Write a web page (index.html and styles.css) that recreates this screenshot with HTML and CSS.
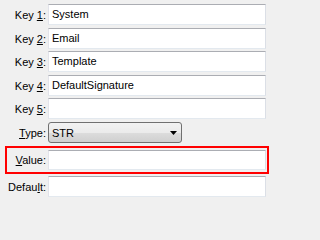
FILE: index.html
```html
<!DOCTYPE html>
<html>
<head>
<meta charset="utf-8">
<link rel="stylesheet" href="styles.css">
</head>
<body>
<div class="form">
  <div class="row first">
    <label class="lbl"><span>Key <u>1</u>:</span></label>
    <div class="field">System</div>
  </div>
  <div class="row">
    <label class="lbl"><span>Key <u>2</u>:</span></label>
    <div class="field">Email</div>
  </div>
  <div class="row tight">
    <label class="lbl"><span>Key <u>3</u>:</span></label>
    <div class="field">Template</div>
  </div>
  <div class="row">
    <label class="lbl"><span>Key <u>4</u>:</span></label>
    <div class="field">DefaultSignature</div>
  </div>
  <div class="row tight">
    <label class="lbl"><span>Key <u>5</u>:</span></label>
    <div class="field"></div>
  </div>
  <div class="row">
    <label class="lbl"><span><u>T</u>ype:</span></label>
    <div class="combo">
      <span>STR</span>
      <svg class="arrow" width="7" height="4" viewBox="0 0 7 4"><path d="M0 0H7L3.5 4Z" fill="#000"/></svg>
    </div>
  </div>
  <div class="row error">
    <label class="lbl"><span><u>V</u>alue:</span></label>
    <div class="field"></div>
  </div>
  <div class="row tight">
    <label class="lbl"><span>Defau<u>l</u>t:</span></label>
    <div class="field"></div>
  </div>
</div>
</body>
</html>
```

FILE: styles.css
```css
html, body {
  margin: 0;
  padding: 0;
  background: #f0f0f0;
}
body {
  width: 270px;
  height: 200px;
  overflow: hidden;
  font-family: "Liberation Sans", Arial, sans-serif;
  font-size: 11px;
  color: #000;
}
.form {
  display: flex;
  flex-direction: column;
  padding-top: 4px;
}
.row {
  display: flex;
  align-items: center;
  height: 21px;
  margin: 3px 4px 0 7px;
}
.row.first { margin-top: 0; }
.row.tight { margin-top: 2px; }
.lbl {
  width: 39px;
  flex: none;
  display: flex;
  justify-content: flex-end;
  white-space: nowrap;
  margin-right: 2px;
}
.lbl span { flex: none; }
.lbl u { text-decoration: underline; }
.field {
  box-sizing: border-box;
  width: 218px;
  height: 21px;
  background: #fff;
  border: 1px solid;
  border-color: #abadb3 #dbdfe6 #e3e9ef #e2e3ea;
  padding: 0 3px;
  line-height: 19px;
  white-space: nowrap;
}
.combo {
  box-sizing: border-box;
  width: 134px;
  height: 21px;
  border: 1px solid #707070;
  border-radius: 3px;
  background: linear-gradient(#f2f2f2 0%, #ebebeb 50%, #dddddd 50%, #cfcfcf 100%);
  display: flex;
  align-items: center;
  justify-content: space-between;
  padding: 0 4px 0 3px;
}
.arrow { display: block; }
.row.error {
  box-sizing: border-box;
  height: 28px;
  margin: 3px 1px 0 5px;
  border: 2px solid #ff0000;
  padding: 2px 1px 2px 0;
}
.row.error .field { height: 20px; line-height: 18px; }
```
